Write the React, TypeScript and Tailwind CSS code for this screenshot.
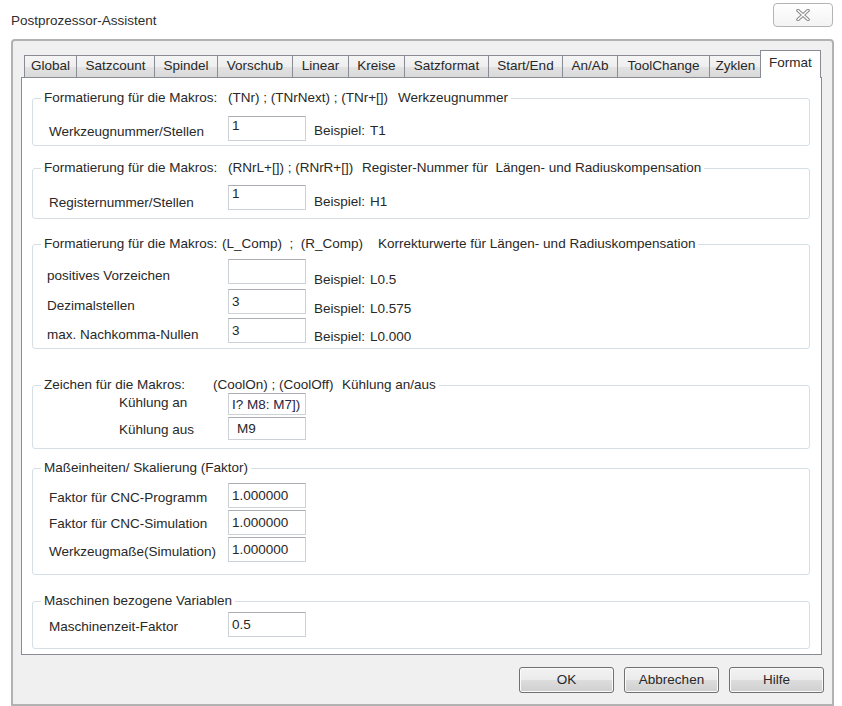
import clsx from 'clsx';
import type { ReactNode } from 'react';

const tabs = [
  { label: 'Global', w: 'w-[53px]' },
  { label: 'Satzcount', w: 'w-[79px]' },
  { label: 'Spindel', w: 'w-[64px]' },
  { label: 'Vorschub', w: 'w-[76px]' },
  { label: 'Linear', w: 'w-[57px]' },
  { label: 'Kreise', w: 'w-[57px]' },
  { label: 'Satzformat', w: 'w-[85px]' },
  { label: 'Start/End', w: 'w-[75px]' },
  { label: 'An/Ab', w: 'w-[56px]' },
  { label: 'ToolChange', w: 'w-[93px]' },
  { label: 'Zyklen', w: 'w-[53px]' },
];

const winButton =
  'rounded-[3px] border border-[#707070] bg-[linear-gradient(#f2f2f2,#ebebeb_50%,#dddddd_50%,#cfcfcf)] shadow-[inset_0_0_0_1px_#fbfbfb]';

function Group({ title, className, children }: { title: ReactNode; className?: string; children: ReactNode }) {
  return (
    <fieldset className={clsx('w-[778px] rounded-[3px] border border-[#d5dfe5]', className)}>
      <legend className="ml-[8px] h-4 px-[3px] whitespace-pre">{title}</legend>
      {children}
    </fieldset>
  );
}

function Field({ value, className }: { value: string; className?: string }) {
  return (
    <input
      readOnly
      value={value}
      className={clsx(
        'w-[78px] shrink-0 border border-[#cdd1d8] border-t-[#abadb3] bg-white pl-[3px] outline-none',
        className,
      )}
    />
  );
}

export default function App() {
  return (
    <div className="h-[706px] w-[842px] overflow-hidden bg-white font-['Liberation_Sans',Arial,sans-serif] text-[13.5px] leading-4 text-[#282828]">
      {/* title bar */}
      <div className="flex h-[39px] items-start justify-between">
        <div className="pl-[11px] pt-[13px] text-[#2e2e2e]">Postprozessor-Assistent</div>
        <div className="mr-[9px] mt-[3px] flex h-[24px] w-[60px] items-center justify-center rounded-[4px] border border-[#b4b4b4] bg-[linear-gradient(#ffffff,#f3f3f3)]">
          <svg width="14" height="12" viewBox="0 0 14 12">
            <path d="M2 1.5 L12 10.5 M12 1.5 L2 10.5" stroke="#8c8c8c" strokeWidth="3.6" strokeLinecap="round" />
            <path d="M2 1.5 L12 10.5 M12 1.5 L2 10.5" stroke="#ffffff" strokeWidth="1.4" strokeLinecap="round" />
          </svg>
        </div>
      </div>

      {/* dialog client area */}
      <div className="ml-[11px] h-[667px] w-[823px] rounded-t-[4px] border-2 border-[#b2b2b2] bg-[#f0f0f0] pl-[8px] pt-[9px]">
        {/* tab strip */}
        <div className="flex h-[27px] items-end pl-[3px]">
          {tabs.map((t, i) => (
            <div
              key={t.label}
              className={clsx(
                'flex h-[22px] shrink-0 justify-center border border-b-0 border-[#898c95] pt-[2px] whitespace-nowrap',
                'bg-[linear-gradient(#f5f5f5,#eeeeee_50%,#e3e3e3_50%,#d9d9d9)]',
                i > 0 && '-ml-px',
                t.w,
              )}
            >
              {t.label}
            </div>
          ))}
          <div className="relative z-10 -mb-px -ml-[2px] flex h-[28px] w-[61px] shrink-0 justify-center border border-b-0 border-[#898c95] bg-white pt-[4px]">
            Format
          </div>
        </div>

        {/* tab page */}
        <div className="h-[578px] w-[801px] border border-[#898c95] bg-white pl-[10px]">
          <Group className="mt-[12px]" title={
            <>
              <span className="inline-block w-[184px]">Formatierung für die Makros:</span>
              <span className="inline-block w-[170px]">(TNr) ; (TNrNext) ; (TNr+[])</span>
              <span>Werkzeugnummer</span>
            </>
          }>
            <div className="flex items-start pb-[4px] pl-[16px] pt-[10px]">
              <span className="mt-[8px] w-[179px] shrink-0">Werkzeugnummer/Stellen</span>
              <Field value="1" className="h-[25px] pb-[7px]" />
              <span className="ml-[8px] mt-[7px]">Beispiel:</span>
              <span className="ml-[5px] mt-[7px]">T1</span>
            </div>
          </Group>

          <Group className="mt-[14px]" title={
            <>
              <span className="inline-block w-[184px]">Formatierung für die Makros:</span>
              <span className="inline-block w-[134px]">(RNrL+[]) ; (RNrR+[])</span>
              <span>Register-Nummer für  Längen- und Radiuskompensation</span>
            </>
          }>
            <div className="flex items-start pb-[7px] pl-[16px] pt-[9px]">
              <span className="mt-[10px] w-[179px] shrink-0">Registernummer/Stellen</span>
              <Field value="1" className="h-[25px] pb-[8px]" />
              <span className="ml-[8px] mt-[9px]">Beispiel:</span>
              <span className="ml-[5px] mt-[9px]">H1</span>
            </div>
          </Group>

          <Group className="mt-[17px]" title={
            <>
              <span className="inline-block w-[178px]">Formatierung für die Makros:</span>
              <span>(L_Comp)  ;  (R_Comp)    Korrekturwerte für Längen- und Radiuskompensation</span>
            </>
          }>
            <div className="flex flex-col gap-[1px] pb-[3px] pl-[14px] pt-[7px]">
              <div className="flex items-start">
                <span className="mt-[9px] w-[181px] shrink-0">positives Vorzeichen</span>
                <Field value="" className="h-[25px]" />
                <span className="ml-[8px] mt-[13px]">Beispiel:</span>
                <span className="ml-[5px] mt-[13px]">L0.5</span>
              </div>
              <div className="flex items-start">
                <span className="mt-[9px] w-[181px] shrink-0">Dezimalstellen</span>
                <Field value="3" className="h-[25px]" />
                <span className="ml-[8px] mt-[12px]">Beispiel:</span>
                <span className="ml-[5px] mt-[12px]">L0.575</span>
              </div>
              <div className="flex items-start">
                <span className="mt-[9px] w-[181px] shrink-0">max. Nachkomma-Nullen</span>
                <Field value="3" className="h-[25px]" />
                <span className="ml-[8px] mt-[11px]">Beispiel:</span>
                <span className="ml-[5px] mt-[11px]">L0.000</span>
              </div>
            </div>
          </Group>

          <Group className="mt-[28px]" title={
            <>
              <span className="inline-block w-[169px]">Zeichen für die Makros:</span>
              <span className="inline-block w-[129px]">(CoolOn) ; (CoolOff)</span>
              <span>Kühlung an/aus</span>
            </>
          }>
            <div className="flex flex-col gap-[2px] pb-[8px] pl-[86px]">
              <div className="flex items-start">
                <span className="mt-[2px] w-[109px] shrink-0">Kühlung an</span>
                <Field value="I? M8: M7])" className="h-[22px] text-[#2a2440]" />
              </div>
              <div className="flex items-start">
                <span className="mt-[5px] w-[109px] shrink-0">Kühlung aus</span>
                <Field value="M9" className="h-[23px] pl-[8px]" />
              </div>
            </div>
          </Group>

          <Group className="mt-[11px]" title="Maßeinheiten/ Skalierung (Faktor)">
            <div className="flex flex-col gap-[2px] pb-[12px] pl-[16px] pt-[7px]">
              <div className="flex items-start">
                <span className="mt-[7px] w-[179px] shrink-0">Faktor für CNC-Programm</span>
                <Field value="1.000000" className="h-[25px]" />
              </div>
              <div className="flex items-start">
                <span className="mt-[6px] w-[179px] shrink-0">Faktor für CNC-Simulation</span>
                <Field value="1.000000" className="h-[25px]" />
              </div>
              <div className="flex items-start">
                <span className="mt-[7px] w-[179px] shrink-0">Werkzeugmaße(Simulation)</span>
                <Field value="1.000000" className="h-[25px]" />
              </div>
            </div>
          </Group>

          <Group className="mt-[18px]" title="Maschinen bezogene Variablen">
            <div className="flex items-start pb-[11px] pl-[16px] pt-[3px]">
              <span className="mt-[7px] w-[179px] shrink-0">Maschinenzeit-Faktor</span>
              <Field value="0.5" className="h-[25px]" />
            </div>
          </Group>
        </div>

        {/* dialog buttons */}
        <div className="mt-[12px] flex w-[801px] justify-end gap-[10px]">
          <button className={clsx(winButton, 'h-[26px] w-[95px]')}>OK</button>
          <button className={clsx(winButton, 'h-[26px] w-[95px]')}>Abbrechen</button>
          <button className={clsx(winButton, '-mr-[2px] h-[26px] w-[95px]')}>Hilfe</button>
        </div>
      </div>
    </div>
  );
}
